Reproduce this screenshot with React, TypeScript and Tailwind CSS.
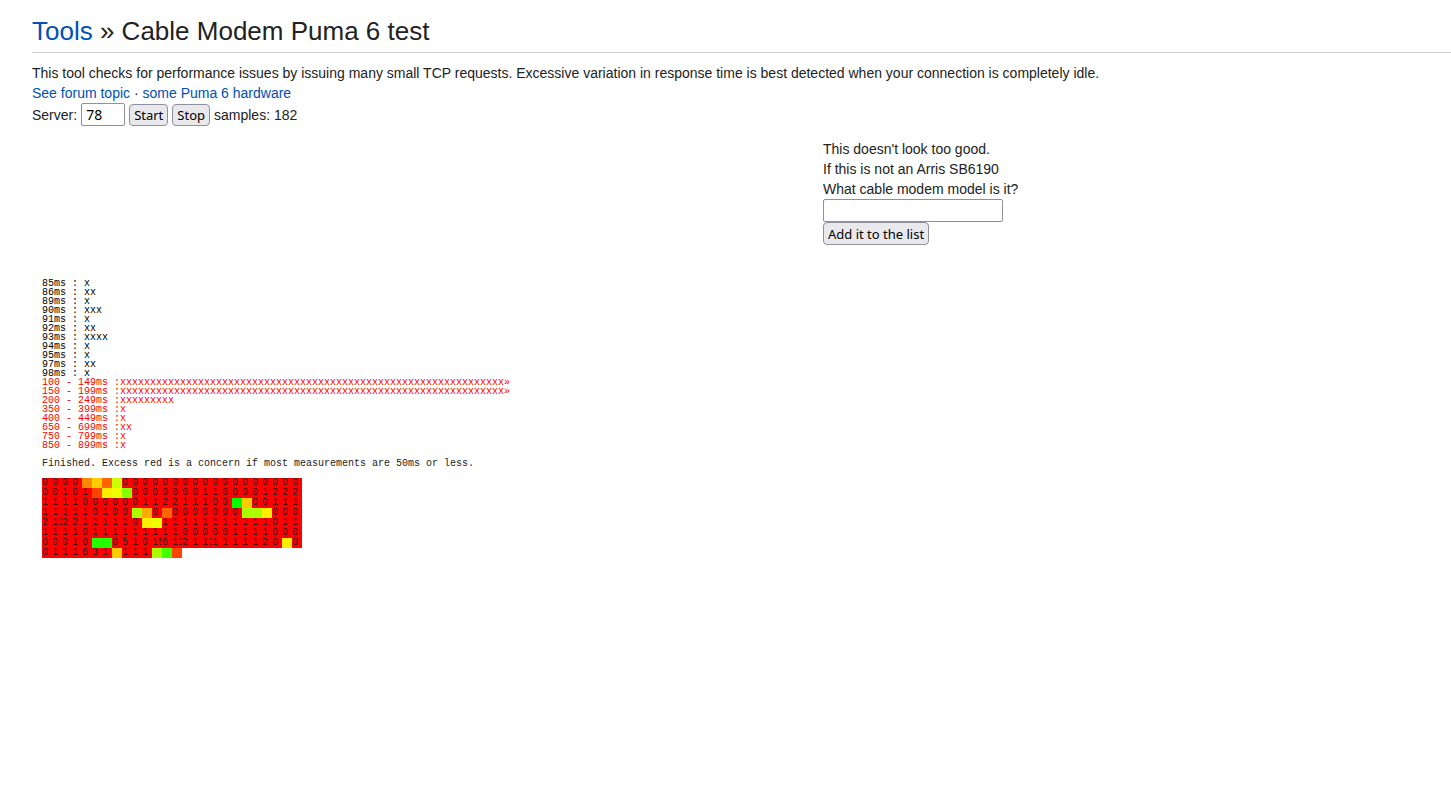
import React, { useState } from 'react'

const histogram = [
  { label: '85ms : ', count: 1 },
  { label: '86ms : ', count: 2 },
  { label: '89ms : ', count: 1 },
  { label: '90ms : ', count: 3 },
  { label: '91ms : ', count: 1 },
  { label: '92ms : ', count: 2 },
  { label: '93ms : ', count: 4 },
  { label: '94ms : ', count: 1 },
  { label: '95ms : ', count: 1 },
  { label: '97ms : ', count: 2 },
  { label: '98ms : ', count: 1 },
  { label: '100 - 149ms :', count: 64, slow: true, more: true },
  { label: '150 - 199ms :', count: 64, slow: true, more: true },
  { label: '200 - 249ms :', count: 9, slow: true },
  { label: '350 - 399ms :', count: 1, slow: true },
  { label: '400 - 449ms :', count: 1, slow: true },
  { label: '650 - 699ms :', count: 2, slow: true },
  { label: '750 - 799ms :', count: 1, slow: true },
  { label: '850 - 899ms :', count: 1, slow: true },
]

// letters are the faster samples, numbers stay red
const colors: Record<string, string> = {
  a: 'bg-[#00ff00]',
  b: 'bg-[#22ff00]',
  c: 'bg-[#44ff00]',
  d: 'bg-[#88ff00]',
  e: 'bg-[#aaff00]',
  f: 'bg-[#ccff00]',
  g: 'bg-[#eeff00]',
  h: 'bg-[#ffee00]',
  i: 'bg-[#ffcc00]',
  j: 'bg-[#ffaa00]',
  k: 'bg-[#ff8800]',
  l: 'bg-[#ff6600]',
  m: 'bg-[#ff4400]',
}

const samples = [
  '0 0 0 0 k i l f 0 0 0 0 0 0 0 0 0 0 0 0 0 0 0 0 0 0',
  '0 0 1 0 1 m h g d 0 0 0 0 0 0 0 1 1 0 0 0 0 1 2 2 2',
  '1 1 1 1 0 0 0 0 0 0 1 1 2 2 1 1 1 0 0 a i 0 0 1 1 1',
  '1 1 1 1 1 0 1 0 0 e j 0 l 0 0 0 0 0 0 0 e e h 0 0 0',
  '2 11 2 2 1 1 1 1 1 0 h g 1 1 1 1 1 1 1 1 1 1 1 0 1 1',
  '1 1 1 1 0 1 1 1 1 1 1 1 1 1 0 0 0 0 0 1 1 1 1 0 0 0',
  '0 0 0 1 0 b b 0 5 1 0 15 6 11 2 1 13 1 1 1 1 1 2 0 h 0',
  '0 1 1 1 6 3 1 i 1 1 1 e c m',
].map((row) => row.split(' '))

const inputStyle = "h-[23px] rounded-xs border border-[#8f8f9d] px-1 font-['Noto_Sans',sans-serif] text-black"
const buttonStyle = "rounded border border-[#8f8f9d] bg-[#e9e9ed] px-1 font-['Noto_Sans',sans-serif] text-[13px] leading-5 text-black"

export default function PumaTest() {
  const [server, setServer] = useState('78')
  const [model, setModel] = useState('')

  return (
    <div className="min-h-screen bg-white pl-8 pt-[13px] font-['Liberation_Sans',Arial,sans-serif] text-sm leading-5 text-[#222222]">
      <h1 className="border-b border-[#cccccc] pb-[3px] text-[26px] leading-9">
        <a href="#tools" className="text-[#0050b3]">Tools</a> » Cable Modem Puma 6 test
      </h1>
      <div className="pt-2.5">
        <p>
          This tool checks for performance issues by issuing many small TCP requests. Excessive variation in response time is best detected when your connection is completely idle.
        </p>
        <p>
          <a href="#forum" className="text-[#0050b3]">See forum topic</a> · <a href="#hardware" className="text-[#0050b3]">some Puma 6 hardware</a>
        </p>
        <div className="flex items-center gap-1">
          <label htmlFor="server">Server:</label>
          <input
            id="server"
            value={server}
            onChange={(e) => setServer(e.target.value)}
            className={`${inputStyle} w-11`}
          />
          <button type="button" className={buttonStyle}>Start</button>
          <button type="button" className={buttonStyle}>Stop</button>
          <span>samples: 182</span>
        </div>
      </div>

      <div className="mt-[13px] grid grid-cols-[791fr_628fr]">
        <form className="col-start-2 flex flex-col items-start" onSubmit={(e) => e.preventDefault()}>
          <p>This doesn't look too good.</p>
          <p>If this is not an Arris SB6190</p>
          <label htmlFor="model">What cable modem model is it?</label>
          <input
            id="model"
            value={model}
            onChange={(e) => setModel(e.target.value)}
            className={`${inputStyle} w-[180px]`}
          />
          <button type="submit" className={`${buttonStyle} h-[23px]`}>Add it to the list</button>
        </form>
      </div>

      <div className="ml-2.5 mt-[34px] font-['Liberation_Mono','Courier_New',monospace] text-[10px] leading-[9px]">
        <div className="whitespace-pre">
          {histogram.map((row) => (
            <div key={row.label} className={row.slow ? 'text-[#ff0000]' : 'text-black'}>
              {row.label}{'x'.repeat(row.count)}{row.more && '»'}
            </div>
          ))}
        </div>
        <p className="mt-[9px]">Finished. Excess red is a concern if most measurements are 50ms or less.</p>
        <table className="mt-2.5 table-fixed border-collapse">
          <tbody>
            {samples.map((row, y) => (
              <tr key={y}>
                {row.map((cell, x) => (
                  <td key={x} className={`size-2.5 p-0 ${colors[cell] ?? 'bg-[#ff0000]'}`}>
                    <div className="size-2.5 overflow-hidden leading-[10px]">{colors[cell] ? '' : cell}</div>
                  </td>
                ))}
              </tr>
            ))}
          </tbody>
        </table>
      </div>
    </div>
  )
}
